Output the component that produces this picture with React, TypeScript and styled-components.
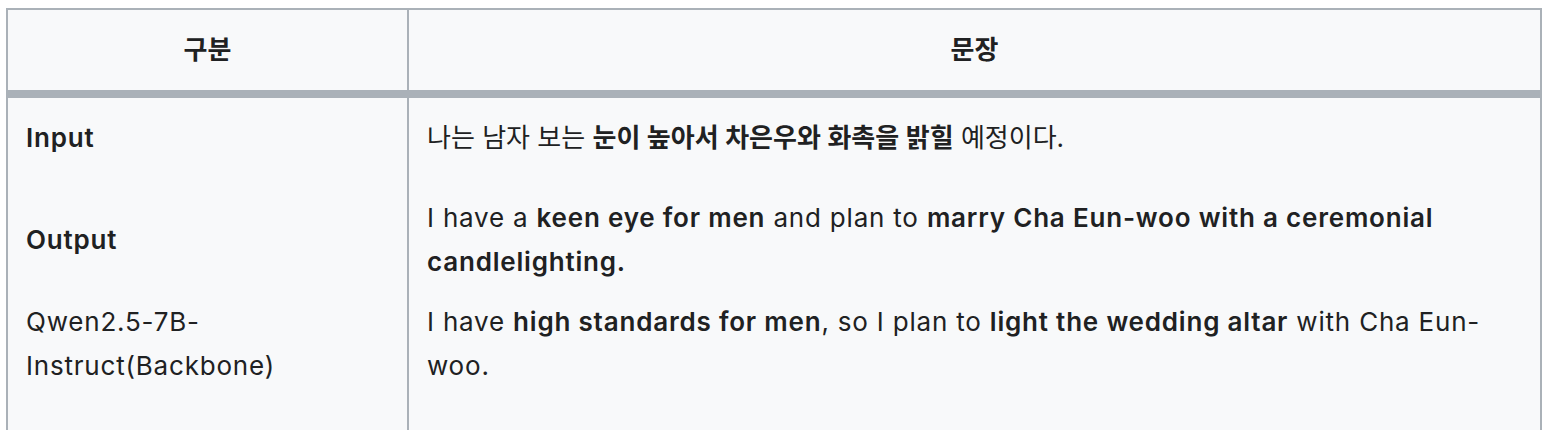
import React from 'react';
import styled, { createGlobalStyle } from 'styled-components';

const GlobalStyle = createGlobalStyle`
  html, body {
    margin: 0;
    padding: 0;
    background: #ffffff;
  }
  body {
    padding: 8px 10px 0 6px;
    font-family: Inter, "Noto Sans CJK KR", "Noto Sans", sans-serif;
    color: #202122;
  }
`;

const Table = styled.table`
  width: 1536px;
  table-layout: fixed;
  border-collapse: separate;
  border-spacing: 0;
  background: #f8f9fa;
  border: 2px solid #aab1b8;
  font-size: 26px;
  line-height: 44px;
  letter-spacing: 0.8px;
`;

const HeaderCell = styled.th<{ $width?: number }>`
  box-sizing: border-box;
  width: ${({ $width }) => ($width ? `${$width}px` : 'auto')};
  padding: 18px;
  text-align: center;
  font-weight: 600;
  letter-spacing: 0;
  border-bottom: 8px solid #aab1b8;

  & + & {
    border-left: 2px solid #aab1b8;
  }
`;

const BodyRow = styled.tr`
  & > td {
    padding: 8px 18px;
  }

  &:first-child > td {
    padding-top: 18px;
    padding-bottom: 28px;
  }

  &:last-child > td {
    padding-bottom: 48px;
  }
`;

const LabelCell = styled.td<{ $bold?: boolean }>`
  box-sizing: border-box;
  vertical-align: middle;
  font-weight: ${({ $bold }) => ($bold ? 600 : 400)};
`;

const SentenceCell = styled.td`
  box-sizing: border-box;
  vertical-align: middle;
  border-left: 2px solid #aab1b8;
`;

const Sentence = styled.div<{ $korean?: boolean }>`
  max-width: 1080px;
  letter-spacing: ${({ $korean }) => ($korean ? '0' : 'inherit')};
`;

const Strong = styled.strong`
  font-weight: 600;
`;

const rows = [
  {
    label: 'Input',
    bold: true,
    korean: true,
    sentence: (
      <>
        나는 남자 보는 <Strong>눈이 높아서 차은우와 화촉을 밝힐</Strong> 예정이다.
      </>
    ),
  },
  {
    label: 'Output',
    bold: true,
    korean: false,
    sentence: (
      <>
        I have a <Strong>keen eye for men</Strong> and plan to{' '}
        <Strong>marry Cha Eun-woo with a ceremonial candlelighting.</Strong>
      </>
    ),
  },
  {
    label: 'Qwen2.5-7B-Instruct(Backbone)',
    bold: false,
    korean: false,
    sentence: (
      <>
        I have <Strong>high standards for men</Strong>, so I plan to{' '}
        <Strong>light the wedding altar</Strong> with Cha Eun-woo.
      </>
    ),
  },
];

const App: React.FC = () => {
  return (
    <>
      <GlobalStyle />
      <Table>
        <thead>
          <tr>
            <HeaderCell $width={399}>구분</HeaderCell>
            <HeaderCell>문장</HeaderCell>
          </tr>
        </thead>
        <tbody>
          {rows.map((row) => (
            <BodyRow key={row.label}>
              <LabelCell $bold={row.bold}>{row.label}</LabelCell>
              <SentenceCell>
                <Sentence $korean={row.korean}>{row.sentence}</Sentence>
              </SentenceCell>
            </BodyRow>
          ))}
        </tbody>
      </Table>
    </>
  );
};

export default App;
